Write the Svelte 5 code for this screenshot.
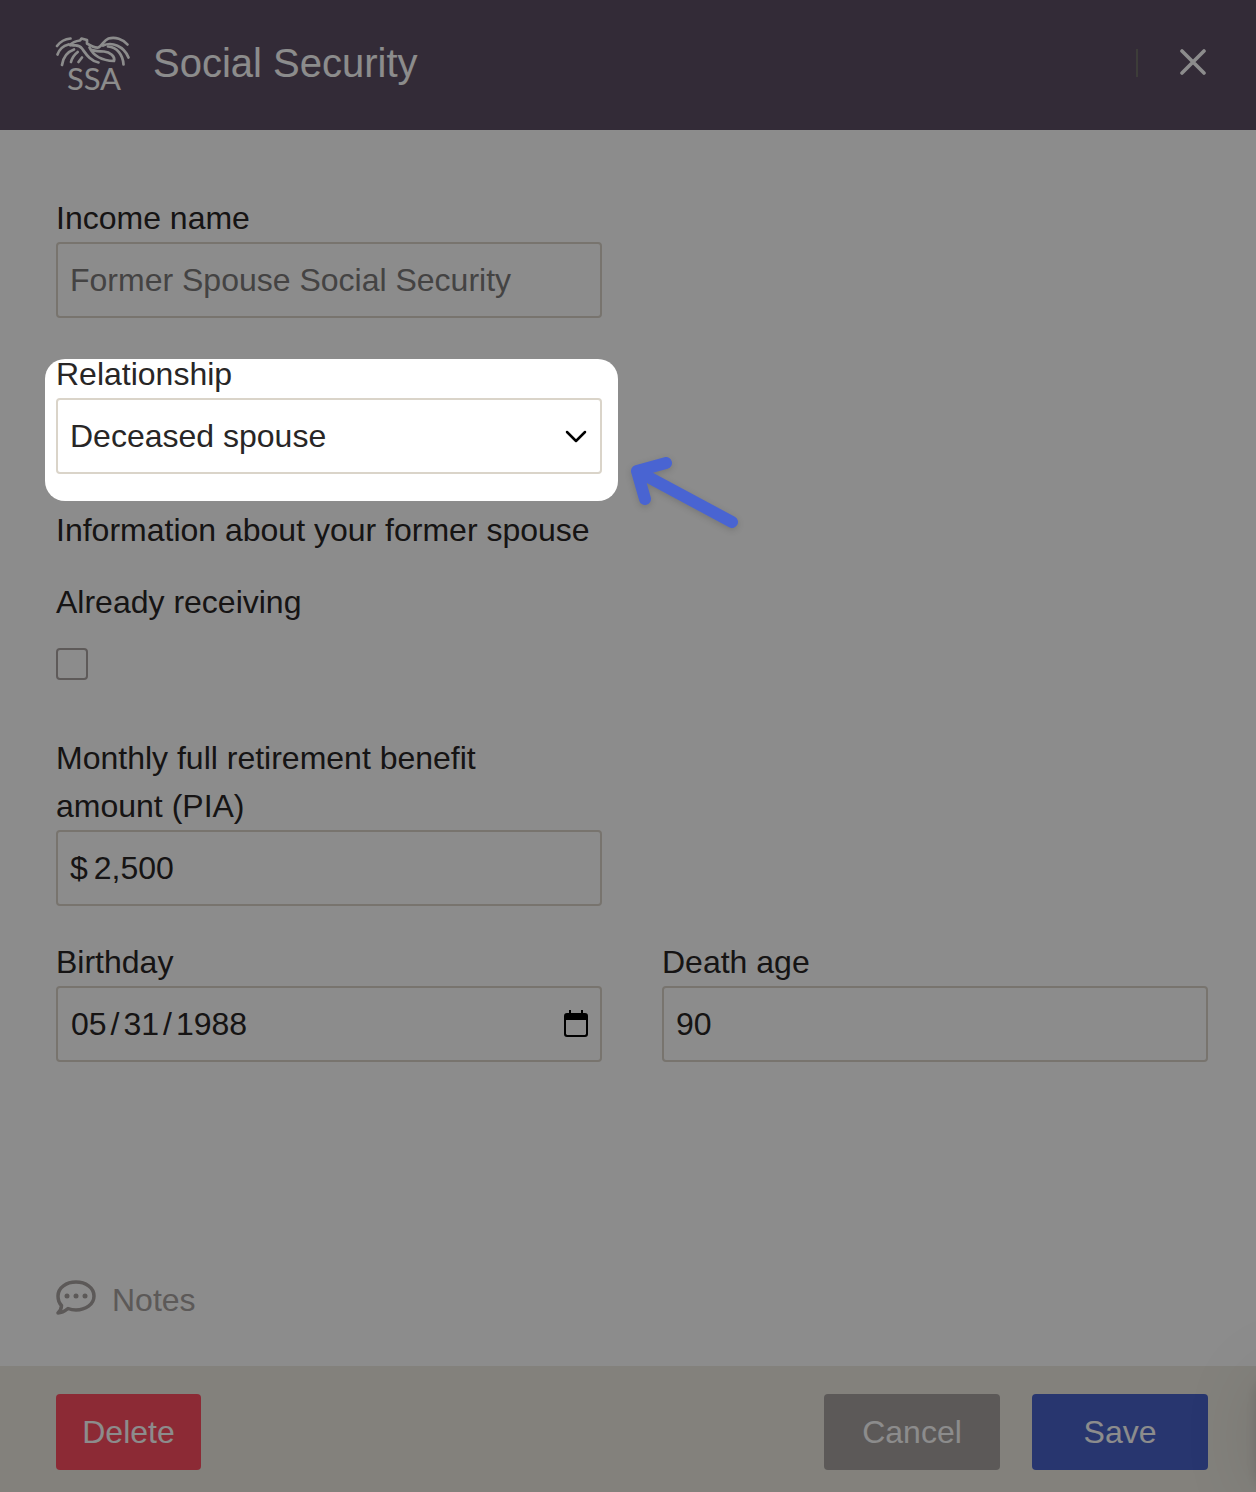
<script lang="ts">
  let incomeName = $state('');
  let relationship = $state('deceased');
  let receiving = $state(false);
  let pia = $state('2,500');
  let birthday = $state('1988-05-31');
  let deathAge = $state('90');

  const relationships = [
    { value: 'divorced', label: 'Divorced spouse' },
    { value: 'deceased', label: 'Deceased spouse' },
  ];
</script>

<div class="panel">
  <header>
    <svg class="logo" viewBox="0 0 84 64" aria-hidden="true">
      <g fill="none" stroke="currentColor" stroke-width="2.7" stroke-linecap="round" stroke-linejoin="round">
        <path d="M7 15C10 11 15 8 20.500 7.500" />
        <path d="M7.500 23.500C9 19 13 15 18.500 13.500" />
        <path d="M12 34C13 27 17 21 24 18.500" />
        <path d="M21 31C22 27 24.500 23.500 27.700 21" />
        <path d="M28.500 31L32 26.500" />
        <path d="M20 14C23 10.500 26 10 30 9.500L31.500 7.500L37 9L37 12.500C41 15 45 17 48.500 16.500C53 14 53.500 9.500 58.500 7.500C65 5.500 73 8 77.500 13.500" />
        <path d="M20 14C25 15.500 28 12 32 17.500C36 23 40 30 48.500 31.500" />
        <path d="M39.500 16.500C43 24 51 29.500 64 30C65.500 25.500 60 21 54 20.500C49 20.500 45 20 42 19" />
        <path d="M53 14.500C62 10.500 74 15 78.500 26.500" />
        <path d="M58 15.500C67 16 73 24 73.500 33.500" />
      </g>
      <text x="44" y="59" text-anchor="middle">SSA</text>
    </svg>
    <h1>Social Security</h1>
    <button class="close" type="button" aria-label="Close">
      <svg viewBox="0 0 28 28" aria-hidden="true"><path d="M2 2L24 24M24 2L2 24" /></svg>
    </button>
  </header>

  <main>
    <div class="grid">
      <div class="field">
        <label for="income-name">Income name</label>
        <input id="income-name" class="box" type="text" placeholder="Former Spouse Social Security" bind:value={incomeName} />
      </div>

      <div class="field start spotlight">
        <label for="relationship">Relationship</label>
        <div class="control">
          <select id="relationship" class="box" bind:value={relationship}>
            {#each relationships as r}
              <option value={r.value}>{r.label}</option>
            {/each}
          </select>
          <svg class="chevron" viewBox="0 0 24 24" aria-hidden="true"><path d="M3 8L12 17L21 8" /></svg>
        </div>
        <svg class="arrow" viewBox="0 0 120 84" aria-hidden="true">
          <path d="M106 72L11 21M40 13L11 21L19 49" />
        </svg>
      </div>
    </div>

    <h2>Information about your former spouse</h2>

    <div class="grid">
      <div class="field">
        <label for="receiving">Already receiving</label>
        <input id="receiving" type="checkbox" bind:checked={receiving} />
      </div>

      <div class="field start">
        <label for="pia">Monthly full retirement benefit amount (PIA)</label>
        <div class="box money">
          <span>$</span>
          <input id="pia" type="text" inputmode="decimal" bind:value={pia} />
        </div>
      </div>

      <div class="field start">
        <label for="birthday">Birthday</label>
        <div class="control">
          <input id="birthday" class="box" type="date" bind:value={birthday} />
          <svg class="calendar" viewBox="0 0 24 28" aria-hidden="true">
            <path d="M5 0h2v3h10V0h2v3h2a3 3 0 0 1 3 3v18a3 3 0 0 1-3 3H3a3 3 0 0 1-3-3V6a3 3 0 0 1 3-3h2zM2 10v14l1 1h18l1-1V10z" fill-rule="evenodd" />
          </svg>
        </div>
      </div>

      <div class="field">
        <label for="death-age">Death age</label>
        <input id="death-age" class="box" type="text" inputmode="numeric" bind:value={deathAge} />
      </div>
    </div>

    <button class="notes" type="button">
      <svg viewBox="0 0 40 40" aria-hidden="true">
        <path d="M20 2C29.500 2 38 7.500 38 16C38 24.500 29.500 30 20 30C17 30 14.500 29.500 12 28.500C9 31 5.500 33 2 33C4 31 5.500 28 5.500 25.500C3 23 2 19.500 2 16C2 7.500 10.500 2 20 2Z" />
        <circle cx="11" cy="16" r="2.500" /><circle cx="20" cy="16" r="2.500" /><circle cx="29" cy="16" r="2.500" />
      </svg>
      Notes
    </button>
  </main>

  <footer>
    <button class="btn delete" type="button">Delete</button>
    <button class="btn cancel" type="button">Cancel</button>
    <button class="btn save" type="button">Save</button>
  </footer>
  <div class="launcher"></div>
</div>

<style>
  :global(body) { margin: 0; }
  .panel {
    position: relative; overflow: hidden; min-height: 100vh;
    display: flex; flex-direction: column;
    background: #fff; color: #282626;
    font: 32px/48px "Liberation Sans", Arial, sans-serif;
  }
  .panel * { box-sizing: border-box; }
  button, input, select { font: inherit; color: inherit; margin: 0; }
  h1, h2 { margin: 0; font-weight: 400; }
  h2 { font-size: 32px; margin: 32px 0 24px; }

  header {
    display: flex; align-items: center; height: 130px; padding: 0 48px 4px 50px;
    background: #5e4f65; color: #fff;
  }
  h1 { font-size: 40px; margin-left: 19px; flex: 1; }
  .logo { width: 84px; height: 64px; overflow: visible; color: #fff; }
  .logo text { font: 31px Lato, sans-serif; fill: currentColor; }
  .close {
    display: flex; align-items: center; height: 28px; padding: 0 0 0 42px;
    border: 0; border-left: 2px solid #6f6f68; background: none;
  }
  .close svg { width: 28px; height: 28px; fill: none; stroke: #fff; stroke-width: 3.6; stroke-linecap: round; }

  main { flex: 1; display: flex; flex-direction: column; padding: 64px 48px 42px 56px; }
  .grid { display: grid; grid-template-columns: repeat(2, minmax(0, 1fr)); gap: 32px 60px; }
  .field { display: flex; flex-direction: column; }
  .start { grid-column: 1; }
  label { padding-right: 24px; }
  .box {
    width: 100%; height: 76px; padding: 0 12px;
    border: 2px solid #dad4c9; border-radius: 4px; background: #fff; outline: none;
  }
  .box::placeholder { color: #7c7a7a; opacity: 1; }
  .control { position: relative; }
  select.box { appearance: none; display: block; }
  .money { display: flex; align-items: center; gap: 6px; }
  .money input { flex: 1; min-width: 0; padding: 0; border: 0; background: none; outline: none; }
  .chevron {
    position: absolute; right: 14px; top: 26px; width: 24px; height: 24px; pointer-events: none;
    fill: none; stroke: #000; stroke-width: 2.5; stroke-linecap: round; stroke-linejoin: round;
  }
  .calendar { position: absolute; right: 14px; top: 24px; width: 24px; height: 28px; pointer-events: none; }
  input[type='date'] { display: block; }
  input[type='date']::-webkit-datetime-edit-text { padding: 0 3px; }
  input[type='date']::-webkit-calendar-picker-indicator { opacity: 0; }
  input[type='checkbox'] {
    appearance: none; width: 32px; height: 32px; margin: 22px 0;
    border: 2px solid #aca4a3; border-radius: 4px;
  }

  /* Tour step: everything outside the highlighted field is dimmed. */
  .spotlight { position: relative; }
  .spotlight::after {
    content: ''; position: absolute; z-index: 2; inset: 9px -16px -27px -11px;
    border-radius: 20px; box-shadow: 0 0 0 3000px rgb(0 0 0 / 45%); pointer-events: none;
  }
  .arrow {
    position: absolute; z-index: 3; left: 100%; top: 100px; width: 120px; height: 84px; margin-left: 24px;
    fill: none; stroke: #4964d2; stroke-width: 12; stroke-linecap: round; stroke-linejoin: round;
    filter: drop-shadow(0 2px 3px rgb(0 0 0 / 15%)); pointer-events: none;
  }

  .notes {
    display: flex; align-items: center; gap: 16px; align-self: flex-start;
    margin-top: auto; padding: 0; border: 0; background: none; color: #a8a2a0;
  }
  .notes svg { width: 40px; height: 40px; fill: none; stroke: currentColor; stroke-width: 3.5; stroke-linejoin: round; }
  .notes circle { fill: currentColor; stroke: none; }

  footer { display: flex; gap: 32px; padding: 28px 48px 22px 56px; background: #eeebe2; }
  .btn { width: 176px; height: 76px; padding: 0; border: 0; border-radius: 4px; color: #fff; }
  .delete { width: 145px; margin-right: auto; background: #ff4e62; }
  .cancel { background: #a8a2a0; }
  .save { background: #4963ca; }
  .launcher {
    position: absolute; right: -120px; bottom: 0; width: 120px; height: 120px;
    border-radius: 24px; box-shadow: 0 2px 12px rgb(0 0 0 / 12%), 0 4px 80px rgb(0 0 0 / 10%);
  }
</style>
